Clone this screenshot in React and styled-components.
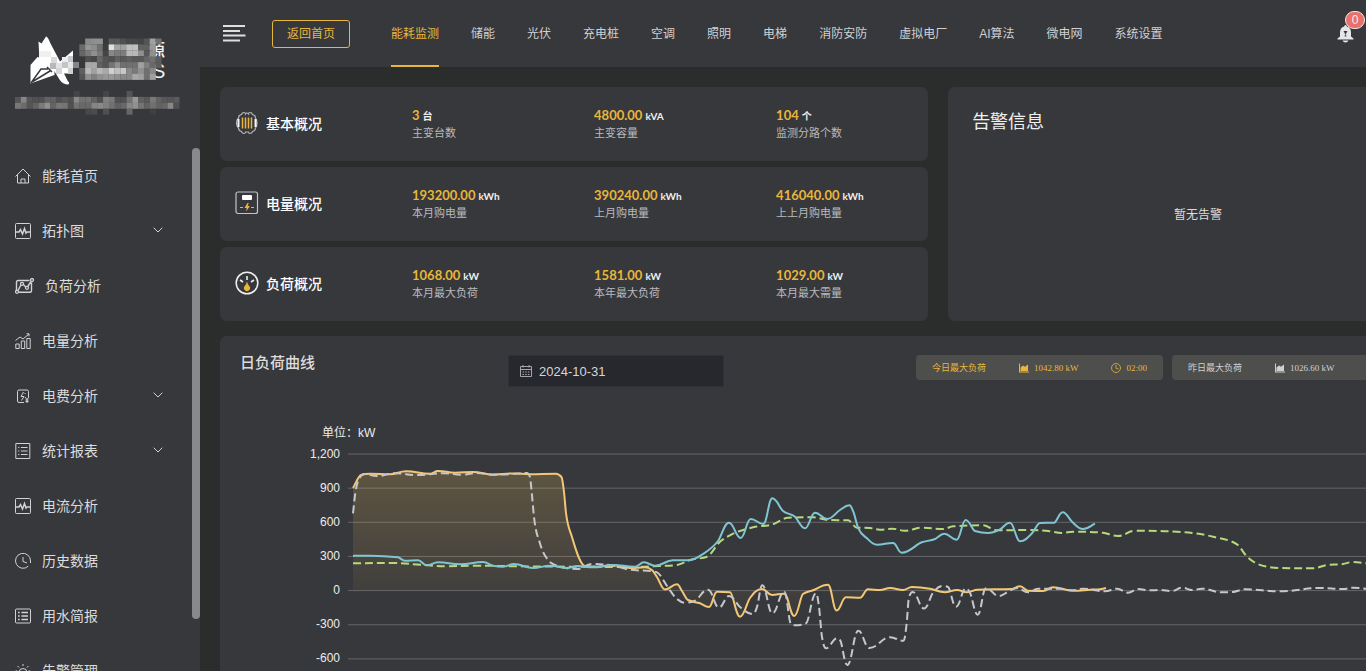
import styled, { createGlobalStyle } from "styled-components";

const GlobalStyle = createGlobalStyle`
  * {
    box-sizing: border-box;
  }
  body {
    margin: 0;
    background: #2b2d2c;
    color: #dcdcdd;
    font-family: "Liberation Sans", "Noto Sans CJK SC", sans-serif;
    font-size: 12px;
  }
  a {
    color: inherit;
    text-decoration: none;
  }
`;

const Layout = styled.div`
  display: flex;
  height: 100vh;
  overflow: hidden;
`;

const Sidebar = styled.aside`
  display: flex;
  flex-direction: column;
  flex: 0 0 200px;
  background: #37383c;
`;

const Brand = styled.div`
  flex: 0 0 148px;
  svg {
    display: block;
  }
`;

const MenuWrapper = styled.nav`
  position: relative;
  flex: 1;
  min-height: 0;
  overflow: hidden;
`;

const Menu = styled.ul`
  margin: 0;
  padding: 0;
  list-style: none;
`;

const ScrollThumb = styled.div`
  position: absolute;
  top: 0;
  right: 0;
  width: 8px;
  height: 90%;
  border-radius: 4px;
  background: #88898d;
`;

const MenuLink = styled.a`
  display: flex;
  align-items: center;
  gap: 11px;
  height: 55px;
  padding: 0 37px 0 15px;
  font-size: 14px;
  svg {
    flex: none;
    fill: none;
    stroke: #d2d2d4;
  }
`;

const MenuText = styled.span`
  flex: 1;
  padding-bottom: 2px;
`;

const Main = styled.div`
  flex: 1;
  min-width: 0;
  overflow: hidden;
`;

const TopBar = styled.header`
  display: flex;
  align-items: center;
  height: 67px;
  padding: 0 12px 0 23px;
  background: #37383c;
`;

const IconButton = styled.button`
  position: relative;
  display: block;
  padding: 0;
  border: 0;
  background: none;
  svg {
    display: block;
  }
`;

const HomeButton = styled.button`
  height: 28px;
  margin: 0 41px 0 26px;
  padding: 0 14px 2px;
  border: 1px solid #e8b63a;
  border-radius: 3px;
  background: none;
  color: #e8b63a;
  font-family: inherit;
  font-size: 12px;
`;

const Tabs = styled.nav`
  display: flex;
  flex: 1;
  align-self: stretch;
  gap: 32px;
`;

const Tab = styled.a`
  display: flex;
  align-items: center;
  white-space: nowrap;
  border-bottom: 2px solid ${(props) => (props.$active ? "#e8b63a" : "transparent")};
  color: ${(props) => (props.$active ? "#e8b63a" : "#d0d0d2")};
`;

const Badge = styled.span`
  position: absolute;
  top: -14px;
  left: 8px;
  width: 20px;
  height: 18px;
  border: 1px solid #f5e6e6;
  border-radius: 9px;
  background: #e8716c;
  color: #fbeaea;
  font-size: 12px;
  line-height: 16px;
  text-align: center;
`;

const Content = styled.main`
  display: flex;
  flex-direction: column;
  gap: 15px;
  min-width: 1248px;
  padding: 20px 0 0 20px;
`;

const Overview = styled.div`
  display: grid;
  grid-template-columns: 17fr 12fr;
  gap: 20px;
`;

const StatList = styled.div`
  display: flex;
  flex-direction: column;
  gap: 6px;
`;

const Card = styled.section`
  border-radius: 7px;
  background: #37383c;
`;

const StatCard = styled(Card)`
  display: grid;
  grid-template-columns: 177fr 182fr 182fr 152fr;
  align-items: center;
  height: 74px;
  padding-left: 15px;
`;

const StatHead = styled.div`
  display: flex;
  align-items: center;
  gap: 7px;
  padding-bottom: 3px;
`;

const StatTitle = styled.h2`
  margin: 0;
  color: #fff;
  font-size: 14px;
  font-weight: 500;
`;

const StatValue = styled.div`
  color: #e8b63a;
  font-family: Lato, "Noto Sans CJK SC", sans-serif;
  font-size: 13px;
  font-weight: 700;
  line-height: 17px;
`;

const Unit = styled.small`
  margin-left: 3px;
  color: #f0f0f0;
  font-size: 10px;
`;

const StatLabel = styled.div`
  color: #b9babc;
  font-size: 11px;
  line-height: 17px;
`;

const AlarmCard = styled(Card)`
  display: flex;
  flex-direction: column;
  padding: 22px 0 0 24px;
`;

const AlarmTitle = styled.h2`
  margin: 0;
  color: #f0f0f0;
  font-size: 18px;
  font-weight: 400;
  line-height: 26px;
`;

const AlarmEmpty = styled.p`
  margin: 70px 24px 0 0;
  line-height: 20px;
  text-align: center;
`;

const ChartCard = styled(Card)`
  padding-top: 19px;
`;

const ChartHead = styled.div`
  display: flex;
  align-items: flex-start;
  padding: 0 29px 0 20px;
`;

const ChartTitle = styled.h2`
  flex: 0 0 268px;
  margin: 0;
  font-size: 15px;
  font-weight: 500;
  line-height: 16px;
`;

const DateField = styled.label`
  display: flex;
  align-items: center;
  gap: 7px;
  width: 216px;
  height: 32px;
  padding: 0 11px;
  border: 1px solid #303137;
  border-radius: 2px;
  background: #27282e;
`;

const DateInput = styled.input`
  flex: 1;
  min-width: 0;
  padding: 0;
  border: 0;
  outline: 0;
  background: none;
  color: #d6d6d8;
  font-family: inherit;
  font-size: 13px;
`;

const Peaks = styled.div`
  display: flex;
  gap: 9px;
  margin-left: auto;
`;

const Peak = styled.div`
  display: flex;
  align-items: center;
  gap: 33px;
  min-width: 247px;
  height: 25px;
  padding: 0 16px;
  border-radius: 4px;
  background: #4e4e4d;
  color: ${(props) => (props.$today ? "#e8b63a" : "#d0d0d0")};
  font-family: "Liberation Serif", "Noto Sans CJK SC", serif;
  font-size: 9px;
`;

const PeakItem = styled.span`
  display: flex;
  align-items: center;
  gap: 5px;
`;

const Chart = styled.svg`
  display: block;
  width: 100%;
  margin-top: 13px;
  text {
    fill: #ececec;
    font-size: 12px;
  }
`;

// logo tiles, one hex grey per cell, "--" leaves the cell empty
const nameTiles = [
  "--8a8f90--5a5a5048484455a070",
  "6a958c703ce0a5a0c0c0606098--",
  "667a907845887c7cb8b8905890--",
  "--5048685550605860585865705c",
  "--a8a860557590707070a0806a5c",
  "60b8a0b8a8d0c0c8887a907088--",
  "559080909898908888a8a070a0--",
];
const captionTiles = [
  "--------------------45--------45------55----------------",
  "5585555050626050585088707262508078505072986058786258555a",
  "786c55627a9064787450726868858880706068869074627062668850",
  "------------------------484c--50------66------40--------",
];

const tileRects = (rows, x0, y0) =>
  rows.flatMap((row, r) =>
    row.match(/../g).map((tone, c) =>
      tone === "--" ? null : (
        <rect
          key={`${r}-${c}`}
          x={x0 + c * 5.87}
          y={y0 + r * 5.9}
          width="6"
          height="6"
          fill={`#${tone}${tone}${tone}`}
        />
      )
    )
  );

const Logo = () => (
  <svg width="200" height="148" viewBox="0 0 200 148">
    <g fill="#fff">
      <path d="M46 36.500q2 .5 4 6l10 19 13-11v23h-9l4 8q2 1 .5 3-6 0-9-5l-8-13-12-5-1-20 3 2z" />
      <path d="M30.500 83.500V65l7-8 17 4v14z" />
    </g>
    <path
      d="M31 83L41 69h7M32 82l18-11M47 67l5 5"
      fill="none"
      stroke="#37383c"
      strokeWidth="1.500"
    />
    <path d="M32 64l8-7 4 6z" fill="#fff" />
    <g>
      <rect x="39" y="51" width="12" height="6" fill="#f0f0f0" />
      <rect x="51" y="57" width="6" height="6" fill="#dadada" />
      <rect x="50" y="63" width="6" height="6" fill="#b8b8b8" />
      <rect x="56" y="63" width="6" height="6" fill="#e2e2e2" />
      <rect x="62" y="57" width="6" height="6" fill="#ededed" />
      <rect x="68" y="56" width="5" height="6" fill="#c8c8c8" />
      <rect x="62" y="62" width="6" height="6" fill="#c4c4c4" />
      <rect x="68" y="62" width="5" height="6" fill="#e6e6e6" />
      <rect x="73" y="62" width="6" height="6" fill="#84858a" />
      <rect x="56" y="68" width="6" height="6" fill="#d6d6d6" />
      <rect x="68" y="68" width="5" height="6" fill="#d0d0d0" />
    </g>
    <text x="147" y="57" fontSize="18" fontWeight="500" fill="#f2f2f2">
      源
    </text>
    <text x="152" y="78" fontSize="20" fill="#f2f2f2">
      S
    </text>
    <g>{tileRects(nameTiles, 79.300, 38.500)}</g>
    <g>{tileRects(captionTiles, 15, 91)}</g>
  </svg>
);

const HomeIcon = () => (
  <svg width="16" height="16" viewBox="0 0 16 16">
    <path d="M.5 8.500L8 1l7.500 7.500M2.500 7v8h11V7M6 15v-4h4v4" />
  </svg>
);

const WaveIcon = () => (
  <svg width="16" height="16" viewBox="0 0 16 16">
    <rect x=".5" y=".5" width="15" height="15" rx="1" />
    <path d="M1 9h3l1.500-2.500 2 4.500 2-5.500 1.500 4.500 1-1h3" strokeWidth="1.500" />
  </svg>
);

const LoadIcon = () => (
  <svg width="19" height="16" viewBox="0 0 19 16">
    <path
      d="M14.500 2.500H3q-1.500 0-1.500 1.500v8M4 14.300h11q1.500 0 1.500-1.500V4.500M3 12.500l2.800-5.300M8.300 6.500l2.500 2.500M12.700 8.500l3.300-5"
      strokeWidth="1.400"
    />
    <g strokeWidth="1.300">
      <circle cx="7" cy="5.800" r="1.500" />
      <circle cx="12" cy="9.800" r="1.500" />
      <circle cx="17" cy="2" r="1.500" />
      <circle cx="2" cy="13.800" r="1.500" />
    </g>
  </svg>
);

const BarsIcon = () => (
  <svg width="16" height="16" viewBox="0 0 16 16">
    <path d="M.8 11h3.400v4.500H.8zM6.300 8h3.400v7.500H6.300zM11.800 5.500h3.400v10h-3.400z" />
    <path d="M.5 7.500L5 4l3 2 6-5M11.500.8H14v2.500" />
  </svg>
);

const FeeIcon = () => (
  <svg width="16" height="16" viewBox="0 0 16 16">
    <path d="M9 14.500H4q-1.500 0-1.500-1.500V3.500Q2.500 2 4 2h8q1.500 0 1.500 1.500V9" />
    <path d="M8.500 4L6 8.500h3L6.500 12.500M9.500 5.500h1" />
    <path d="M10 9l2 2.500L14 9M12 11.500V15M10.500 12h3M10.500 13.500h3" />
  </svg>
);

const ReportIcon = () => (
  <svg width="16" height="16" viewBox="0 0 16 16">
    <path d="M.8.500h14v15H.8z" />
    <path d="M6 4.500h6.500M6 8h6.500M6 11.500h6.500M3.200 4.500h1.200M3.200 8h1.200M3.200 11.500h1.200" />
  </svg>
);

const ClockIcon = () => (
  <svg width="16" height="16" viewBox="0 0 16 16">
    <path d="M13.200 13.200A7.500 7.500 0 1 1 15.500 8v2M8 4v4.500l4 1.500" />
  </svg>
);

const BriefIcon = () => (
  <svg width="16" height="16" viewBox="0 0 16 16">
    <rect x=".5" y="1" width="15" height="14" rx="1" />
    <path
      d="M6.500 4.500H13M6.500 8H13M6.500 11.500H13M3 4.500h1.700M3 8h1.700M3 11.500h1.700"
      strokeWidth="1.600"
    />
  </svg>
);

const AlarmIcon = () => (
  <svg width="16" height="16" viewBox="0 0 16 16">
    <path d="M4 15V9.500a4 4 0 0 1 8 0V15M2 15.500h12M8 1v2M2.500 3L4 4.500M13.500 3L12 4.500M.5 8h2M13.500 8h2" />
  </svg>
);

const Chevron = () => (
  <svg width="10" height="8" viewBox="0 0 10 8">
    <path d="M.7.700L5 5 9.300.700" />
  </svg>
);

const TransformerIcon = () => (
  <svg width="24" height="24" viewBox="0 0 24 24" fill="none">
    <path
      d="M6.500 3.500Q7 1.500 9 1.500q1.500 0 1.500 1.500Q12 1 13.500 3q0-1.500 1.500-1.500 2 0 2.500 2 3 .5 3 3.500Q22 9 22 12t-1.500 5q0 3-3 3.500-.5 2-2.500 2-1.500 0-1.500-1.500h-3q0 1.500-1.500 1.500-2 0-2.500-2-3-.5-3-3.500Q1.500 15 1.500 12t2-5q0-3 3-3.500z"
      stroke="#b4b5b7"
      strokeWidth="1.200"
    />
    <path d="M3.500 8v8M20.500 8v8" stroke="#f4f4f4" strokeWidth="2" />
    <path
      d="M7.500 6.500v11M10.500 6.500v11M13.500 6.500v11M16.500 6.500v11"
      stroke="#e8b63a"
      strokeWidth="1.500"
    />
  </svg>
);

const MeterIcon = () => (
  <svg width="24" height="24" viewBox="0 0 24 24" fill="none">
    <rect x="1" y="1" width="21.500" height="21.500" rx="2" stroke="#c4c4c6" strokeWidth="1.200" />
    <rect x="7" y="4" width="10" height="5" rx="1" fill="#fff" />
    <path d="M5 16.500h3M16 16.500h3" stroke="#e8b63a" />
    <path d="M12.500 12L9.500 17h2.300l-.8 3.500 4-5.500h-2.300l1-3z" fill="#e8b63a" />
  </svg>
);

const GaugeIcon = () => (
  <svg width="24" height="24" viewBox="0 0 24 24" fill="none">
    <circle cx="12" cy="12" r="10.800" stroke="#f0f0f0" strokeWidth="1.500" />
    <path d="M12 5v4M5 9l3 2M19 9l-3 2" stroke="#f0f0f0" strokeWidth="1.600" />
    <path d="M12 10.500q.7 3 2.200 4.500a3 3 0 1 1-4.400 0Q11.300 13.500 12 10.500z" fill="#e8b63a" />
  </svg>
);

const CalendarIcon = () => (
  <svg width="12" height="12" viewBox="0 0 12 12" fill="none" stroke="#a4a5a9">
    <path d="M.5 1.500h11v10H.5zM.5 4.500h11M3 0v2.500M9 0v2.500" />
    <path d="M2.500 7h7M2.500 9.500h7" strokeDasharray="1.500 1.200" />
  </svg>
);

const AreaIcon = () => (
  <svg width="10" height="10" viewBox="0 0 10 10" fill="currentColor">
    <path d="M0 .5h1v8h9v1H0zM1.500 8V4.500L4 2.500l2 1.200L9 1.500V8z" />
  </svg>
);

const TimeIcon = () => (
  <svg width="10" height="10" viewBox="0 0 10 10" fill="none" stroke="currentColor" strokeWidth=".8">
    <circle cx="5" cy="5" r="4.500" />
    <path d="M5 2v3.300l2.500.7" />
  </svg>
);

const BellIcon = () => (
  <svg width="17" height="18" viewBox="0 0 17 18">
    <path
      d="M8.500 0q1.300 0 1.300 1.500 4.200 1 4.200 6v4l2.500 2v1H.5v-1l2.500-2v-4q0-5 4.200-6Q7.200 0 8.500 0zM5.500 15.500h6q-1 2-3 2t-3-2z"
      fill="#e6e6e6"
    />
    <path d="M6.500 6h4l-1.400 2.500v1h-1.200v-1zM7.700 10.300h1.600v1.200H7.700z" fill="#37383c" />
  </svg>
);

const menuItems = [
  { text: "能耗首页", icon: <HomeIcon /> },
  { text: "拓扑图", icon: <WaveIcon />, expandable: true },
  { text: "负荷分析", icon: <LoadIcon /> },
  { text: "电量分析", icon: <BarsIcon /> },
  { text: "电费分析", icon: <FeeIcon />, expandable: true },
  { text: "统计报表", icon: <ReportIcon />, expandable: true },
  { text: "电流分析", icon: <WaveIcon /> },
  { text: "历史数据", icon: <ClockIcon /> },
  { text: "用水简报", icon: <BriefIcon /> },
  { text: "告警管理", icon: <AlarmIcon /> },
];

const tabs = [
  "能耗监测",
  "储能",
  "光伏",
  "充电桩",
  "空调",
  "照明",
  "电梯",
  "消防安防",
  "虚拟电厂",
  "AI算法",
  "微电网",
  "系统设置",
];

const stats = [
  {
    title: "基本概况",
    icon: <TransformerIcon />,
    items: [
      { value: "3", unit: "台", label: "主变台数" },
      { value: "4800.00", unit: "kVA", label: "主变容量" },
      { value: "104", unit: "个", label: "监测分路个数" },
    ],
  },
  {
    title: "电量概况",
    icon: <MeterIcon />,
    items: [
      { value: "193200.00", unit: "kWh", label: "本月购电量" },
      { value: "390240.00", unit: "kWh", label: "上月购电量" },
      { value: "416040.00", unit: "kWh", label: "上上月购电量" },
    ],
  },
  {
    title: "负荷概况",
    icon: <GaugeIcon />,
    items: [
      { value: "1068.00", unit: "kW", label: "本月最大负荷" },
      { value: "1581.00", unit: "kW", label: "本年最大负荷" },
      { value: "1029.00", unit: "kW", label: "本月最大需量" },
    ],
  },
];

const ticks = ["1,200", "900", "600", "300", "0", "-300", "-600"];

const yellow = [
  [353, 488], [361, 475], [370, 473.7], [390, 474.3], [406, 471.3], [430, 473.7],
  [438, 471], [455, 472.7], [473, 472], [493, 474.4], [513, 473.4], [530, 474.3],
  [556, 473.7], [561.5, 477], [564, 492], [566, 513], [572, 537], [585, 566],
  [597, 566.7], [613, 565.3], [630, 568], [645, 567.3], [652, 570], [657, 577],
  [665, 589.5], [677, 584.3], [682, 591], [688, 600], [700, 603.3], [709, 607],
  [717, 591.7], [730, 592.3], [740, 616.7], [750, 598], [762, 589], [772, 595],
  [784, 593.7], [794.3, 616], [803, 594], [813, 590.3], [828, 584.7], [836.7, 610.5],
  [846, 597.3], [860, 597.7], [868, 589.3], [880, 590], [890, 588], [903, 590],
  [912, 587], [930, 588.7], [945, 592.3], [957, 590], [967, 592.3], [977, 589.7],
  [1012, 589], [1020, 586.3], [1028, 590.7], [1043, 591], [1053, 587.3], [1073, 590.7],
  [1090, 589.7], [1100, 589.3], [1106, 588],
];

const grey = [
  [353, 513.3], [355.3, 493.3], [360, 477.3], [364, 474], [377, 476], [395, 473.3],
  [417, 475], [443, 473.3], [463, 474.7], [477, 473], [493, 474.7], [512, 474],
  [527, 473], [530, 477], [531.3, 488], [534, 517], [540, 543.5], [548, 560],
  [557, 565.7], [577, 569], [592, 564], [613, 565.7], [630, 569.7], [653, 571.3],
  [658, 573], [667, 586], [677, 599], [685, 602.7], [695, 600.7], [708, 589.7],
  [719, 607.5], [729, 596], [740, 607], [753, 614], [757, 607], [762.3, 585.3],
  [772.3, 613.3], [784.3, 591.7], [790.7, 623.3], [795, 625.3], [806, 623.3], [816, 593.3],
  [819, 607], [822, 637], [826, 648.3], [837, 638.3], [840, 640], [847.3, 665],
  [858.3, 630.7], [869.3, 648], [890, 637.3], [903.3, 640.7], [906.7, 623], [909, 597],
  [912.7, 592], [924, 608.5], [933, 592.7], [943, 586], [948, 587], [956, 606.7],
  [966, 588.3], [970, 593], [977.7, 614.7], [986, 588.3], [999, 596], [1008, 591.7],
  [1017, 588], [1028, 592.3], [1038, 588.7], [1060, 588.7], [1072, 590.3], [1083, 588.7],
  [1105, 591.3], [1117, 588.7], [1128, 592.7], [1138, 589], [1150, 590.3], [1160, 590],
  [1172, 591], [1182, 587.7], [1192, 590], [1202, 588.7], [1222, 592.3], [1233, 592],
  [1245, 589.3], [1280, 591.3], [1320, 588], [1343, 589], [1353, 587.7], [1366, 588.7],
  [1430, 590],
];

const blue = [
  [353, 555.7], [370, 555.7], [398, 557.3], [405, 560.7], [418, 560.3], [426.7, 565.3],
  [438, 562.3], [460, 564.3], [483, 562], [493, 565.7], [503, 566.7], [514, 564],
  [533, 568], [550, 565.7], [567, 568], [578, 566], [593, 567.3], [612, 565],
  [635, 566.7], [644, 562.3], [655, 565.7], [673, 560.3], [688, 560.3], [703, 554],
  [718, 541], [729, 522.7], [740.7, 538], [750.7, 519], [763.3, 524], [772.3, 498.3],
  [783, 511], [795, 516.7], [805, 528.3], [815, 512.7], [827, 519], [840, 510],
  [849.3, 505.3], [853.3, 511.7], [858.3, 528.3], [867, 538.3], [877, 544.7], [893, 543],
  [901.7, 552.7], [921.7, 542.3], [935, 539], [944.3, 533.7], [956.7, 539.7], [965.7, 520],
  [975, 531], [988, 533], [1000, 529.3], [1010, 522.7], [1020, 541.3], [1032, 533.3],
  [1040, 523], [1054, 522.7], [1062.7, 512.3], [1072, 521.7], [1083, 529], [1095, 523.7],
];

const green = [
  [353, 563.3], [393, 563], [420, 564.7], [447, 566.3], [473, 565.7], [517, 566.3],
  [577, 566.7], [630, 567], [660, 566], [677, 565], [690, 560], [707, 556.7],
  [720, 541.7], [730, 535.3], [753, 527.3], [773, 524.3], [788, 517.7], [813, 517.3],
  [828, 520], [848, 520.3], [857, 527.7], [870, 528], [880, 529.7], [892, 528.7],
  [905, 530.7], [922, 527.7], [943, 529], [953, 526.3], [983, 525.3], [997, 530.3],
  [1027, 530], [1050, 531.3], [1062, 533], [1073, 531.7], [1103, 532.7], [1118, 536],
  [1135, 530.7], [1177, 531.7], [1213, 536.7], [1237, 544.3], [1247, 556.7], [1267, 566.7],
  [1280, 568], [1312, 568.3], [1327, 565], [1343, 564], [1353, 562], [1366, 563.3],
  [1430, 566],
];

// monotone cubic through the points, so flat stretches stay flat
const smooth = (points) => {
  const slopes = points.map((p, i) => {
    if (i === 0 || i === points.length - 1) {
      const [a, b] = i === 0 ? [points[0], points[1]] : [points[i - 1], p];
      return (b[1] - a[1]) / (b[0] - a[0]);
    }
    const h0 = p[0] - points[i - 1][0];
    const h1 = points[i + 1][0] - p[0];
    const s0 = (p[1] - points[i - 1][1]) / h0;
    const s1 = (points[i + 1][1] - p[1]) / h1;
    const mean = (s0 * h1 + s1 * h0) / (h0 + h1);
    return (
      (Math.sign(s0) + Math.sign(s1)) *
      Math.min(Math.abs(s0), Math.abs(s1), Math.abs(mean) / 2)
    );
  });
  return points.reduce((path, p, i) => {
    if (i === 0) return `M${p[0]} ${p[1]}`;
    const q = points[i - 1];
    const dx = (p[0] - q[0]) / 3;
    // level stretches on a peak or in a dip get a longer handle
    const dq = slopes[i - 1] === 0 ? dx * 1.3 : dx;
    const dp = slopes[i] === 0 ? dx * 1.3 : dx;
    return `${path}C${q[0] + dq} ${q[1] + slopes[i - 1] * dq} ${p[0] - dp} ${
      p[1] - slopes[i] * dp
    } ${p[0]} ${p[1]}`;
  }, "");
};

const LoadChart = () => (
  <Chart viewBox="220 400 1228 340" fill="none" strokeWidth="2">
    <defs>
      <linearGradient id="area" x1="0" y1="471" x2="0" y2="617" gradientUnits="userSpaceOnUse">
        <stop offset="0" stopColor="#fac858" stopOpacity="0.2" />
        <stop offset="1" stopColor="#fac858" stopOpacity="0.02" />
      </linearGradient>
    </defs>
    <text x="322" y="437">
      单位：kW
    </text>
    {ticks.map((tick, i) => (
      <g key={tick}>
        <text x="340" y={457.5 + i * 34.15} textAnchor="end">
          {tick}
        </text>
        <path d={`M348 ${454 + i * 34.15}H1430`} stroke="#65666a" strokeWidth="1" />
      </g>
    ))}
    <path d={`${smooth(yellow)}V590.500H353z`} fill="url(#area)" />
    <path d={smooth(green)} stroke="#b5da7c" strokeDasharray="8 4" />
    <path d={smooth(yellow)} stroke="#f3c774" />
    <path d={smooth(grey)} stroke="#c6c7cb" strokeDasharray="8 4" />
    <path d={smooth(blue)} stroke="#7fc6d2" />
  </Chart>
);

const App = () => {
  return (
    <Layout>
      <GlobalStyle />
      <Sidebar>
        <Brand>
          <Logo />
        </Brand>
        <MenuWrapper>
          <Menu>
            {menuItems.map((item) => (
              <li key={item.text}>
                <MenuLink href="#">
                  {item.icon}
                  <MenuText>{item.text}</MenuText>
                  {item.expandable && <Chevron />}
                </MenuLink>
              </li>
            ))}
          </Menu>
          <ScrollThumb />
        </MenuWrapper>
      </Sidebar>
      <Main>
        <TopBar>
          <IconButton aria-label="菜单">
            <svg width="23" height="17" viewBox="0 0 23 17" stroke="#dededf" strokeWidth="2">
              <path d="M0 1h22M0 6h17M0 10.500h22.500M0 15.500h17" />
            </svg>
          </IconButton>
          <HomeButton>返回首页</HomeButton>
          <Tabs>
            {tabs.map((tab, i) => (
              <Tab key={tab} href="#" $active={i === 0}>
                {tab}
              </Tab>
            ))}
          </Tabs>
          <IconButton aria-label="告警">
            <BellIcon />
            <Badge>0</Badge>
          </IconButton>
        </TopBar>
        <Content>
          <Overview>
            <StatList>
              {stats.map((stat) => (
                <StatCard key={stat.title}>
                  <StatHead>
                    {stat.icon}
                    <StatTitle>{stat.title}</StatTitle>
                  </StatHead>
                  {stat.items.map((item) => (
                    <div key={item.label}>
                      <StatValue>
                        {item.value}
                        <Unit>{item.unit}</Unit>
                      </StatValue>
                      <StatLabel>{item.label}</StatLabel>
                    </div>
                  ))}
                </StatCard>
              ))}
            </StatList>
            <AlarmCard>
              <AlarmTitle>告警信息</AlarmTitle>
              <AlarmEmpty>暂无告警</AlarmEmpty>
            </AlarmCard>
          </Overview>
          <ChartCard>
            <ChartHead>
              <ChartTitle>日负荷曲线</ChartTitle>
              <DateField>
                <CalendarIcon />
                <DateInput type="text" aria-label="日期" defaultValue="2024-10-31" />
              </DateField>
              <Peaks>
                <Peak $today>
                  今日最大负荷
                  <PeakItem>
                    <AreaIcon />
                    1042.80 kW
                  </PeakItem>
                  <PeakItem>
                    <TimeIcon />
                    02:00
                  </PeakItem>
                </Peak>
                <Peak>
                  昨日最大负荷
                  <PeakItem>
                    <AreaIcon />
                    1026.60 kW
                  </PeakItem>
                </Peak>
              </Peaks>
            </ChartHead>
            <LoadChart />
          </ChartCard>
        </Content>
      </Main>
    </Layout>
  );
};

export default App;
